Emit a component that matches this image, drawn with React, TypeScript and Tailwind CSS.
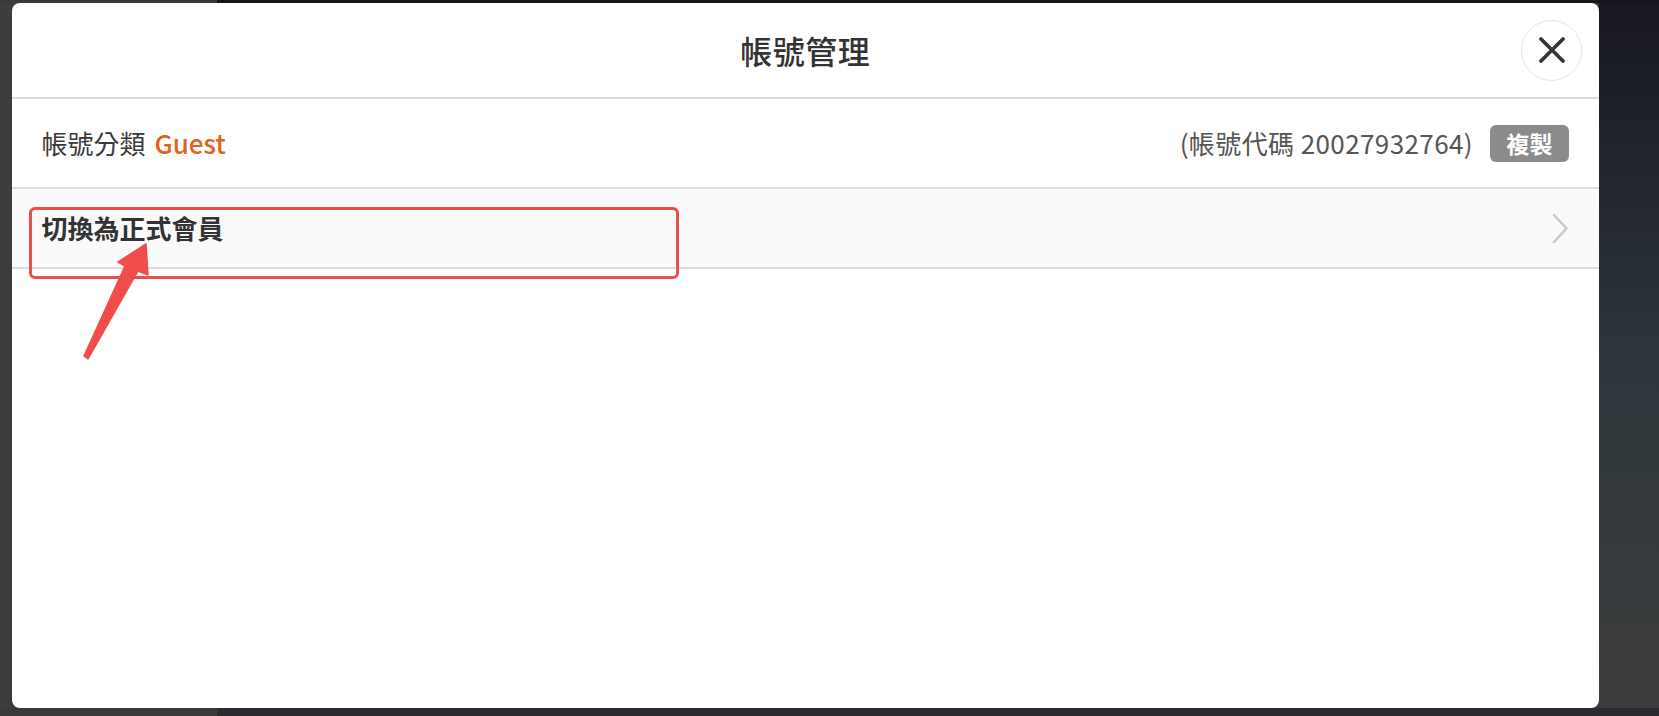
export default function App() {
  return (
    <div className="relative w-[1659px] h-[716px] overflow-hidden flex flex-col bg-[#3c3c3c] font-['Noto_Sans_CJK_TC',sans-serif]">
      {/* backdrop strips */}
      <div className="h-[3px] flex shrink-0">
        <div className="w-[217px] bg-[#3a3a3a]" />
        <div className="flex-1 bg-[#16161e]" />
      </div>

      <div className="flex-1 flex min-h-0">
        <div className="w-[11.5px] shrink-0 bg-[#3c3c3c]" />

        {/* modal */}
        <div className="relative w-[1587.5px] shrink-0 bg-white rounded-[8px] flex flex-col">
          <div className="h-[96px] grid grid-cols-[1fr_auto_1fr] items-center border-b-2 border-[#dcdcdc]">
            <div />
            <h1 className="text-[32px] leading-none font-medium text-[#333] tracking-[0.5px]">帳號管理</h1>
            <div className="flex justify-end pr-[17px]">
              <button className="w-[61px] h-[61px] rounded-full border-[1.5px] border-[#e6e6e6] flex items-center justify-center bg-white">
                <svg width="26" height="26" viewBox="0 0 26 26">
                  <path d="M2 2 L24 24 M24 2 L2 24" stroke="#333" strokeWidth="3.6" strokeLinecap="round" fill="none" />
                </svg>
              </button>
            </div>
          </div>

          <div className="h-[90px] flex items-center justify-between px-[30px] border-b-2 border-[#dedede]">
            <div className="flex items-baseline gap-[9px] text-[26px] leading-none">
              <span className="text-[#3a3a3a]">帳號分類</span>
              <span className="text-[#e2621b] font-medium">Guest</span>
            </div>
            <div className="flex items-center gap-[17px]">
              <span className="text-[26px] leading-none text-[#555] tracking-[0.4px]">(帳號代碼 20027932764)</span>
              <button className="w-[79px] h-[37px] rounded-[6px] bg-[#8b8b8b] text-white text-[23px] leading-none font-bold flex items-center justify-center">
                複製
              </button>
            </div>
          </div>

          <div className="h-[80px] flex items-center justify-between pl-[30px] pr-[30px] bg-[#fafafa] border-b-2 border-[#dcdcdc]">
            <span className="text-[26px] leading-none font-bold text-[#333]">切換為正式會員</span>
            <svg width="17" height="31" viewBox="0 0 17 31">
              <path d="M2 2 L14.5 15.5 L2 29" stroke="#c9c9c9" strokeWidth="2.5" strokeLinecap="round" strokeLinejoin="round" fill="none" />
            </svg>
          </div>

          <div className="flex-1" />

          {/* annotation box */}
          <div className="absolute left-[17px] top-[204px] w-[650px] h-[72px] border-[3px] border-[#e5504d] rounded-[6px]" />
        </div>

        <div className="flex-1 bg-gradient-to-b from-[#181820] via-[#2c363b] to-[#3d3d3d]" />
      </div>

      <div className="h-[8px] flex shrink-0">
        <div className="w-[217px] bg-[#3a3a3a]" />
        <div className="flex-1 bg-[#2b2b30]" />
      </div>

      {/* annotation arrow */}
      <svg className="absolute left-0 top-0 pointer-events-none" width="200" height="380" viewBox="0 0 200 380">
        <polygon
          points="146,244 148,275 138,271 88,359 84,356 125,266 118,262"
          fill="#f04c4a"
          stroke="#f04c4a"
          strokeWidth="1.5"
          strokeLinejoin="round"
        />
      </svg>
    </div>
  );
}
